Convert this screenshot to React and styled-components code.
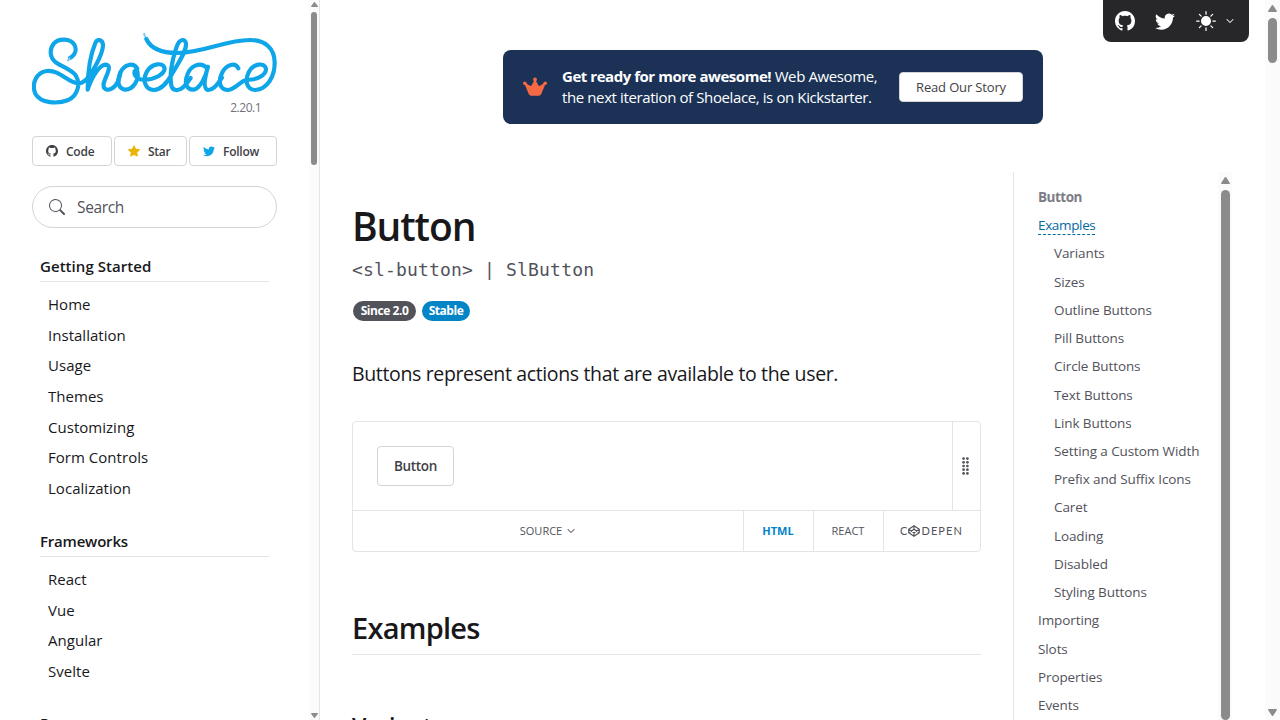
import React from 'react';
import styled, { createGlobalStyle } from 'styled-components';
import {
  BsGithub,
  BsTwitter,
  BsStarFill,
  BsSearch,
  BsSunFill,
  BsChevronDown,
} from 'react-icons/bs';

const sans = "'Open Sans', 'Noto Sans', sans-serif";

const GlobalStyle = createGlobalStyle`
  *, *::before, *::after { box-sizing: border-box; }
  body {
    margin: 0;
    background: #fff;
    color: #27272a;
    font-family: ${sans};
    overflow: hidden;
  }
  svg { display: block; flex: none; }
  h1, h2, h3, p, ul { margin: 0; padding: 0; }
  ul { list-style: none; }
`;

const Page = styled.div`
  display: flex;
  width: 1280px;
  height: 720px;
  overflow: hidden;
`;

/* Scrollbars */

const Track = styled.div`
  display: flex;
  flex-direction: column;
  align-items: center;
  flex: none;
  width: ${(p) => p.$width}px;
  padding-top: ${(p) => p.$top}px;
  background: #fbfbfb;
`;

const Thumb = styled.div`
  width: ${(p) => p.$width}px;
  height: ${(p) => p.$height}px;
  margin-top: ${(p) => p.$gap}px;
  border-radius: 5px;
  background: #8b8b8b;
`;

const DownArrow = styled.div`
  margin-top: auto;
  padding-bottom: ${(p) => p.$bottom}px;
`;

function Arrow({ width, height, down }) {
  return (
    <svg width={width} height={height} viewBox="0 0 9 7" preserveAspectRatio="none">
      <path
        d={
          down
            ? 'M.6 0h7.8q.9.4.3 1.3L5.3 6.4q-.8 1-1.6 0L.3 1.3Q-.3.4.6 0Z'
            : 'M.6 7h7.8q.9-.4.3-1.3L5.3.6q-.8-1-1.6 0L.3 5.7Q-.3 6.6.6 7Z'
        }
        fill="#8b8b8b"
      />
    </svg>
  );
}

/* Sidebar */

const Sidebar = styled.aside`
  display: flex;
  flex: none;
  width: 320px;
  border-right: 1px solid #e4e4e7;
`;

const SidebarBody = styled.div`
  display: flex;
  flex-direction: column;
  flex: none;
  width: 309px;
  padding: 32px 32px 0;
  overflow: hidden;
`;

const Version = styled.div`
  height: 20px;
  margin-top: -7px;
  padding-right: 16px;
  color: #71717a;
  font-size: 12px;
  letter-spacing: -0.5px;
  line-height: 20px;
  text-align: right;
`;

const RepoButtons = styled.div`
  display: flex;
  justify-content: space-between;
  margin-top: 18px;
`;

const RepoButton = styled.a`
  display: flex;
  align-items: center;
  gap: 8px;
  width: ${(p) => p.$width}px;
  height: 30px;
  padding-left: 13px;
  border: 1px solid #d4d4d8;
  border-radius: 4px;
  color: #3f3f46;
  font-size: 12px;
  font-weight: 600;
  letter-spacing: -0.25px;

  svg { color: ${(p) => p.$icon}; }
`;

const SearchBox = styled.div`
  display: flex;
  align-items: center;
  gap: 12px;
  flex: none;
  height: 42px;
  margin-top: 20px;
  padding-left: 16px;
  border: 1px solid #d4d4d8;
  border-radius: 21px;
  color: #52525b;
  font-size: 15.5px;
  letter-spacing: -0.35px;
`;

const NavSection = styled.section`
  margin: ${(p) => p.$top}px 8px 0;
`;

const NavHeading = styled.h2`
  height: 27px;
  border-bottom: 1px solid #e4e4e7;
  color: #18181b;
  font-size: 15px;
  font-weight: 600;
  letter-spacing: ${(p) => p.$spacing}px;
  line-height: 23px;
`;

const NavList = styled.ul`
  padding: 7px 0 0 8px;
`;

const NavItem = styled.li`
  height: 30.7px;
  color: #18181b;
  font-size: 15px;
  letter-spacing: 0.03px;
  line-height: 30px;
`;

/* Main area */

const Main = styled.main`
  flex: 1;
  min-width: 0;
  padding-top: 50px;
`;

const Banner = styled.div`
  display: flex;
  align-items: center;
  width: 540px;
  height: 74px;
  margin-left: 183px;
  padding: 0 20px;
  border-radius: 8px;
  background: #1b3256;
  color: #fff;
`;

const BannerText = styled.p`
  width: 336px;
  padding-left: 15px;
  font-size: 15px;
  letter-spacing: -0.39px;
  line-height: 21px;
  white-space: nowrap;

  strong {
    font-weight: 700;
    letter-spacing: -0.46px;
  }
`;

const StoryButton = styled.a`
  width: 124px;
  height: 30px;
  margin-left: auto;
  border: 1px solid #d4d4d8;
  border-radius: 4px;
  background: #fff;
  color: #3f3f46;
  font-size: 13px;
  letter-spacing: -0.15px;
  line-height: 29px;
  text-align: center;
`;

const Columns = styled.div`
  display: flex;
  height: 548px;
  margin-top: 48px;
`;

const Article = styled.article`
  flex: none;
  width: 693px;
  padding: 32px 32px 0;
`;

const Title = styled.h1`
  height: 46px;
  color: #18181b;
  font-size: 39px;
  font-weight: 600;
  letter-spacing: -1.1px;
  line-height: 44px;
`;

const TagName = styled.div`
  height: 30px;
  margin-top: 4px;
  color: #52525b;
  font-family: 'DejaVu Sans Mono', 'Liberation Mono', monospace;
  font-size: 18px;
  letter-spacing: 0.17px;
  line-height: 31px;
  white-space: pre;
`;

const Badges = styled.div`
  display: flex;
  gap: 6px;
  margin-top: 17px;
  padding-left: 1px;
`;

const Badge = styled.span`
  width: ${(p) => p.$width}px;
  height: 20px;
  border-radius: 10px;
  background: ${(p) => p.$color};
  color: #fff;
  font-size: 12px;
  font-weight: 700;
  letter-spacing: -0.45px;
  line-height: 20px;
  text-align: center;
`;

const Lead = styled.p`
  height: 34px;
  margin-top: 36px;
  color: #18181b;
  font-size: 19.5px;
  letter-spacing: -0.35px;
  line-height: 34px;
  white-space: nowrap;
`;

const Preview = styled.div`
  height: 131px;
  margin-top: 30px;
  border: 1px solid #e4e4e7;
  border-radius: 4px;
`;

const Demo = styled.div`
  display: flex;
  justify-content: space-between;
  height: 88px;
  padding-left: 24px;
`;

const DemoButton = styled.button`
  width: 77px;
  height: 40px;
  margin-top: 24px;
  padding: 0;
  border: 1px solid #d4d4d8;
  border-radius: 4px;
  background: #fff;
  color: #3f3f46;
  font-family: inherit;
  font-size: 13.5px;
  font-weight: 600;
  letter-spacing: -0.3px;
  line-height: 38px;
`;

const Resizer = styled.div`
  display: flex;
  align-items: center;
  width: 28px;
  padding-left: 9px;
  border-left: 1px solid #e4e4e7;
  color: #52525b;
`;

const PreviewBar = styled.div`
  display: flex;
  height: 41px;
  border-top: 1px solid #e4e4e7;
`;

const BarButton = styled.div`
  display: flex;
  align-items: center;
  justify-content: center;
  gap: ${(p) => p.$gap || 0}px;
  width: ${(p) => p.$width}px;
  padding: 0 1px 1px 0;
  border-left: ${(p) => (p.$first ? 0 : 1)}px solid #e4e4e7;
  color: ${(p) => (p.$active ? '#0284c7' : '#52525b')};
  font-size: 11px;
  font-weight: ${(p) => (p.$active ? 700 : 400)};

  svg { stroke-width: ${(p) => (p.$first ? 0.8 : 2.4)}; stroke: currentColor; }
`;

const CodePen = styled.span`
  display: flex;
  align-items: center;
  font-family: Lato, sans-serif;
  font-size: 11px;
  letter-spacing: 1.1px;

  svg { margin: 1px 1px 0 0; }
`;

const SectionTitle = styled.h2`
  height: 47px;
  margin-top: 56px;
  border-bottom: 1px solid #e4e4e7;
  color: #18181b;
  font-size: 29px;
  font-weight: 600;
  letter-spacing: -0.75px;
  line-height: 40px;
`;

const SubTitle = styled.h3`
  margin-top: 54px;
  color: #18181b;
  font-size: 23px;
  font-weight: 600;
  letter-spacing: -0.2px;
  line-height: 35px;
`;

const Toc = styled.nav`
  display: flex;
  width: 219px;
  border-left: 1px solid #e4e4e7;
`;

const TocList = styled.ul`
  flex: 1;
  padding: 11px 0 0 24px;
`;

const TocItem = styled.li`
  height: 28.22px;
  padding-left: ${(p) => (p.$nested ? 16 : 0)}px;
  color: ${(p) => (p.$title ? '#7c7c84' : p.$active ? '#0369a1' : '#52525b')};
  font-size: 13.5px;
  font-weight: ${(p) => (p.$title ? 700 : 400)};
  letter-spacing: ${(p) => (p.$title ? -0.5 : p.$active ? -0.35 : -0.1)}px;
  line-height: 28px;
  white-space: nowrap;

  span {
    display: inline-block;
    height: 24px;
    border-bottom: ${(p) => (p.$active ? '1px dashed #0369a1' : 'none')};
  }
`;

/* Floating toolbar in the page's top right corner */

const Toolbar = styled.div`
  position: absolute;
  top: 0;
  left: 1103px;
  display: flex;
  align-items: center;
  width: 146px;
  height: 42px;
  padding-left: 12px;
  border-radius: 0 0 8px 8px;
  background: #27272a;
  color: #fff;

  svg + svg { margin-left: 20px; }
  svg:nth-of-type(3) { margin-left: 21px; }
  svg:last-child {
    margin-left: 10px;
    stroke: currentColor;
    stroke-width: 0.8;
  }
`;

function Logo() {
  return (
    <svg width="245" height="73" viewBox="36 36 735 219" role="img" aria-label="Shoelace">
      <g fill="none" stroke="#0ea5e9" strokeWidth="12.5" strokeLinecap="round" strokeLinejoin="round">
        <path d="M150 114C166 104 171 88 163 74C150 54 116 55 102 70C86 89 90 115 109 128C130 142 153 148 167 166C182 189 175 225 145 240C112 253 62 250 46 221C33 190 50 157 80 153C119 149 143 188 174 190C193 190 205 172 215 157C229 134 249 97 249 74C247 57 231 56 226 69C213 100 203 150 203 209C216 167 239 136 256 134C280 134 257 168 251 190C248 213 268 215 285 198Q298 182 301 158" />
        <path d="M352 146C340 126 313 132 301 158C290 184 295 206 314 209C340 210 362 176 350 148C333 158 350 181 374 179C403 179 434 163 434 145C430 125 395 130 380 156C366 183 377 209 401 210C427 209 443 185 456 162C474 130 500 94 498 70C494 54 478 57 470 80C457 119 448 166 454 197C457 213 475 214 489 202C500 193 508 180 512 174" />
        <path d="M562 145C541 123 511 137 502 164C491 193 502 210 521 209C541 205 557 171 564 140C555 171 548 205 563 210C580 212 595 191 606 173M655 145C646 126 619 133 606 159C592 188 602 209 622 210C645 210 658 184 680 179C709 181 739 166 738 146C733 126 700 130 686 157C672 186 683 209 706 210C743 207 764 169 764 128C764 86 737 61 692 60C623 58 548 99 471 99C427 99 393 87 379 57" />
      </g>
      <path d="M142 123l9-9M375 51l-3-12" fill="none" stroke="#7fcdf2" strokeWidth="6" />
    </svg>
  );
}

function Crown() {
  return (
    <svg width="24" height="20" viewBox="0 0 24 20" fill="#f36944">
      <circle cx="12" cy="2.5" r="1.9" />
      <circle cx="1.8" cy="6.3" r="1.8" />
      <circle cx="22.2" cy="6.3" r="1.8" />
      <path d="M11.3 3.5h1.4l2.7 4.7q.8 1.2 2 .4l4-2.6 1 .9-3.9 9.7q-.7 2.1-2.4 2.1H7.9q-1.7 0-2.4-2.1L1.6 6.9l1-.9 4 2.6q1.2.8 2-.4Z" />
    </svg>
  );
}

function Grip() {
  const rows = [1.6, 5.3, 9, 12.7, 16.4];
  return (
    <svg width="8" height="18" viewBox="0 0 8 18" fill="currentColor">
      {rows.map((y) => (
        <g key={y}>
          <circle cx="1.6" cy={y} r="1.35" />
          <circle cx="5.4" cy={y} r="1.35" />
        </g>
      ))}
    </svg>
  );
}

function CodePenMark() {
  return (
    <svg width="12" height="12" viewBox="0 0 24 24" fill="none" strokeLinejoin="round">
      <path d="M12 1.5 22.5 8.5v7L12 22.5 1.5 15.5v-7ZM12 1.5v7M12 15.5v7M1.5 8.5 12 15.5l10.5-7M1.5 15.5 12 8.5l10.5 7" />
    </svg>
  );
}

const gettingStarted = ['Home', 'Installation', 'Usage', 'Themes', 'Customizing', 'Form Controls', 'Localization'];
const frameworks = ['React', 'Vue', 'Angular', 'Svelte'];

const examples = [
  'Variants', 'Sizes', 'Outline Buttons', 'Pill Buttons', 'Circle Buttons', 'Text Buttons', 'Link Buttons',
  'Setting a Custom Width', 'Prefix and Suffix Icons', 'Caret', 'Loading', 'Disabled', 'Styling Buttons',
];

const sections = ['Importing', 'Slots', 'Properties', 'Events'];

function NavGroup({ title, items, top, spacing }) {
  return (
    <NavSection $top={top}>
      <NavHeading $spacing={spacing}>{title}</NavHeading>
      <NavList>
        {items.map((item) => (
          <NavItem key={item}>{item}</NavItem>
        ))}
      </NavList>
    </NavSection>
  );
}

export default function App() {
  return (
    <>
      <GlobalStyle />
      <Page>
        <Sidebar>
          <SidebarBody>
            <Logo />
            <Version>2.20.1</Version>
            <RepoButtons>
              <RepoButton $width={80} $icon="#3f3f46"><BsGithub size={12} />Code</RepoButton>
              <RepoButton $width={73} $icon="#eab308"><BsStarFill size={12} />Star</RepoButton>
              <RepoButton $width={88} $icon="#0ea5e9"><BsTwitter size={12} />Follow</RepoButton>
            </RepoButtons>
            <SearchBox><BsSearch size={16} />Search</SearchBox>
            <NavGroup title="Getting Started" items={gettingStarted} top={27} spacing={0.05} />
            <NavGroup title="Frameworks" items={frameworks} top={26} spacing={-0.2} />
            <NavGroup title="Resources" items={[]} top={25} spacing={-0.1} />
          </SidebarBody>
          <Track $width={10} $top={2}>
            <Arrow width={7} height={5} />
            <Thumb $width={6} $height={153} $gap={5} />
            <DownArrow $bottom={2}><Arrow width={7} height={5} down /></DownArrow>
          </Track>
        </Sidebar>

        <Main>
          <Banner>
            <Crown />
            <BannerText>
              <strong>Get ready for more awesome!</strong> Web Awesome,
              <br />
              the next iteration of Shoelace, is on Kickstarter.
            </BannerText>
            <StoryButton>Read Our Story</StoryButton>
          </Banner>

          <Columns>
            <Article>
              <Title>Button</Title>
              <TagName>{'<sl-button> | SlButton'}</TagName>
              <Badges>
                <Badge $width={63} $color="#52525b">Since 2.0</Badge>
                <Badge $width={48} $color="#0284c7">Stable</Badge>
              </Badges>
              <Lead>Buttons represent actions that are available to the user.</Lead>
              <Preview>
                <Demo>
                  <DemoButton>Button</DemoButton>
                  <Resizer><Grip /></Resizer>
                </Demo>
                <PreviewBar>
                  <BarButton $first $width={390} $gap={5}>SOURCE <BsChevronDown size={8} /></BarButton>
                  <BarButton $width={70} $active>HTML</BarButton>
                  <BarButton $width={70}>REACT</BarButton>
                  <BarButton $width={97}>
                    <CodePen>C<CodePenMark />DEPEN</CodePen>
                  </BarButton>
                </PreviewBar>
              </Preview>
              <SectionTitle>Examples</SectionTitle>
              <SubTitle>Variants</SubTitle>
            </Article>

            <Toc>
              <TocList>
                <TocItem $title><span>Button</span></TocItem>
                <TocItem $active><span>Examples</span></TocItem>
                {examples.map((item) => (
                  <TocItem key={item} $nested><span>{item}</span></TocItem>
                ))}
                {sections.map((item) => (
                  <TocItem key={item}><span>{item}</span></TocItem>
                ))}
              </TocList>
              <Track $width={14} $top={5}>
                <Arrow width={9} height={7} />
                <Thumb $width={9} $height={540} $gap={6} />
              </Track>
            </Toc>
          </Columns>
        </Main>

        <Track $width={15} $top={5}>
          <Arrow width={9} height={7} />
          <Thumb $width={9} $height={45} $gap={6} />
          <DownArrow $bottom={4}><Arrow width={9} height={7} down /></DownArrow>
        </Track>
      </Page>
      <Toolbar>
        <BsGithub size={20} />
        <BsTwitter size={20} />
        <BsSunFill size={20} />
        <BsChevronDown size={8} />
      </Toolbar>
    </>
  );
}
